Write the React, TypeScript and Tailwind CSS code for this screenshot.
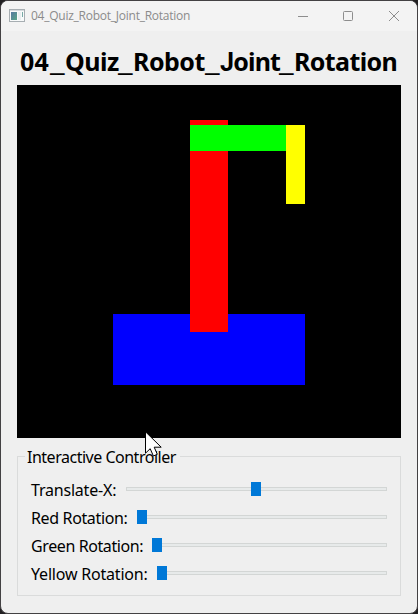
type SliderRow = { label: string; offset: number; labelClass: string; trackClass: string };

const rows: SliderRow[] = [
  { label: 'Translate-X:', offset: 125, labelClass: 'w-[95px] tracking-[-0.2px]', trackClass: 'w-[261px]' },
  { label: 'Red Rotation:', offset: 0, labelClass: 'w-[106px] tracking-[-0.36px]', trackClass: 'w-[250px]' },
  { label: 'Green Rotation:', offset: 0, labelClass: 'w-[121px] tracking-[-0.4px]', trackClass: 'w-[235px]' },
  { label: 'Yellow Rotation:', offset: 0, labelClass: 'w-[126px] tracking-[-0.2px]', trackClass: 'w-[230px]' },
];

const titleParts = [
  { initial: '0', rest: '4', width: 'w-[30px] tracking-[0.3px]', initialClass: '' },
  { initial: 'Q', rest: 'uiz', width: 'w-[53px] tracking-[-0.5px]', initialClass: '' },
  { initial: 'R', rest: 'obot', width: 'w-[72px] tracking-[-0.5px]', initialClass: '' },
  { initial: 'J', rest: 'oint', width: 'w-[59px] tracking-[-0.8px]', initialClass: "font-['Roboto',sans-serif]" },
  { initial: 'R', rest: 'otation', width: 'w-[102px] tracking-[-0.6px]', initialClass: '' },
];

function AppIcon() {
  return (
    <svg width="16" height="14" viewBox="0 0 16 14" className="block shrink-0" shapeRendering="crispEdges">
      <defs>
        <linearGradient id="pane" x1="0" y1="0" x2="1" y2="1">
          <stop offset="0" stopColor="#5579a0" />
          <stop offset="1" stopColor="#58a587" />
        </linearGradient>
      </defs>
      <rect x="0.5" y="0.5" width="15" height="12" fill="#f8fafa" stroke="#a7aeb2" />
      <rect x="1" y="1" width="14" height="1" fill="#d5dadd" />
      <rect x="2" y="3" width="6" height="8" fill="url(#pane)" />
      <rect x="9" y="3" width="3" height="8" fill="#e9eff0" />
      <rect x="13" y="3" width="1" height="5" fill="#78aaa6" />
    </svg>
  );
}

function TitleBar() {
  return (
    <header className="flex h-[30px] shrink-0 items-center bg-[#f3f3f3] pl-2">
      <AppIcon />
      <span className="ml-[6px] w-[160px] whitespace-nowrap font-['Open_Sans',sans-serif] text-[12px] leading-[16px] tracking-[-0.25px] text-[#8b8b8b]">
        04_Quiz_Robot_Joint_Rotation
      </span>
      <svg width="104" height="12" viewBox="0 0 104 12" className="-mt-px ml-[106px] block" fill="none" stroke="#8d8d8d">
        <path d="M1 6.5H11" />
        <rect x="46.5" y="1.5" width="9" height="9" rx="1" />
        <path d="M92 1L102 11M102 1L92 11" />
      </svg>
    </header>
  );
}

function Heading() {
  return (
    <h1 className="flex h-[54px] whitespace-nowrap pl-[3px] pt-[14px] text-[25px] font-bold leading-[32px]">
      {titleParts.map((part, index) => (
        <span key={part.initial + part.rest} className="flex">
          {index > 0 && (
            <span className="w-[15px]">
              <span className="inline-block origin-left scale-x-[1.42]">_</span>
            </span>
          )}
          <span className={part.width}>
            <span className={part.initialClass}>{part.initial}</span>
            {part.rest}
          </span>
        </span>
      ))}
    </h1>
  );
}

function RobotCanvas() {
  return (
    <svg width="384" height="353" viewBox="0 0 384 353" className="block shrink-0 bg-black" shapeRendering="crispEdges">
      <rect x="96" y="229" width="192" height="71" fill="#0000ff" />
      <rect x="173" y="35" width="38" height="212" fill="#ff0000" />
      <rect x="173" y="40" width="96" height="26" fill="#00ff00" />
      <rect x="269" y="40" width="19" height="79" fill="#ffff00" />
    </svg>
  );
}

function Slider({ row }: { row: SliderRow }) {
  return (
    <div className="flex h-7 items-center">
      <span className={`shrink-0 whitespace-nowrap pt-[2px] ${row.labelClass}`}>{row.label}</span>
      <div className={`relative h-1 border border-[#d3d6d5] bg-[#e7eaea] ${row.trackClass}`}>
        <div className="absolute -top-[6px] h-[14px] w-[10px] bg-[#0078d7]" style={{ left: row.offset - 1 }} />
      </div>
    </div>
  );
}

export default function App() {
  return (
    <div className="h-[614px] w-[418px] bg-[#222022]">
      <div className="relative flex h-full flex-col overflow-hidden rounded-[8px] border border-[#434143] bg-[#efefef] font-['Noto_Sans',sans-serif] text-black">
        <TitleBar />
        <main className="flex flex-col px-4">
          <Heading />
          <RobotCanvas />
          <section className="relative mt-[18px] h-[140px] border border-[#dadbdb] pl-[13px] pt-[18px] text-[16px] leading-[20px]">
            <h2 className="absolute -top-[10px] left-[7px] w-[155px] whitespace-nowrap bg-[#efefef] pl-[2px] tracking-[-0.49px]">
              Interactive Controller
            </h2>
            {rows.map((row) => (
              <Slider key={row.label} row={row} />
            ))}
          </section>
        </main>
        <svg width="19" height="27" viewBox="0 0 19 27" className="absolute left-[144px] top-[430px]">
          <path d="M.5 .8V22.2L5.2 17.7L8.4 25L12.3 23.3L9.2 16.2H16.2Z" fill="#fff" stroke="#000" strokeWidth="1" />
        </svg>
      </div>
    </div>
  );
}
